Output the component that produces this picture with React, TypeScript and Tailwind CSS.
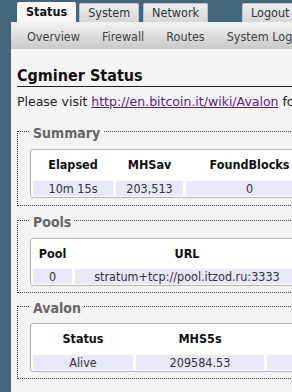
const font = { fontFamily: '"DejaVu Sans Condensed", "DejaVu Sans", Verdana, sans-serif' };
const wideFont = { fontFamily: '"DejaVu Sans", Verdana, sans-serif' };

type Section = {
  title: string;
  box: string;
  cols: string;
  headH: string;
  heads: string[];
  cells: string[];
};

const sections: Section[] = [
  {
    title: "Summary",
    box: "mt-[11px] pt-[8px] pb-[7px]",
    cols: "grid-cols-[80px_67px_127px]",
    headH: "h-[26px]",
    heads: ["Elapsed", "MHSav", "FoundBlocks"],
    cells: ["10m 15s", "203,513", "0"],
  },
  {
    title: "Pools",
    box: "mt-[4px] pt-[8px] pb-[6px]",
    cols: "grid-cols-[39px_224px]",
    headH: "h-[25px]",
    heads: ["Pool", "URL"],
    cells: ["0", "stratum+tcp://pool.itzod.ru:3333"],
  },
  {
    title: "Avalon",
    box: "mt-[3px] pt-[7px] pb-[6px]",
    cols: "grid-cols-[100px_128px_120px]",
    headH: "h-[26px]",
    heads: ["Status", "MHS5s", "Temp"],
    cells: ["Alive", "209584.53", "38"],
  },
];

function Tab({ label, active }: { label: string; active?: boolean }) {
  return (
    <div
      className={
        active
          ? "h-[20px] px-[9px] flex items-center bg-[#f8f8f8] rounded-t-[2px] font-bold text-[#111]"
          : "h-[19px] mt-px px-[8px] flex items-center rounded-t-[2px] border border-b-0 border-[#b9c3c9] bg-gradient-to-b from-[#eeeeee] to-[#d6d6d6] text-[#333]"
      }
    >
      {label}
    </div>
  );
}

export default function App() {
  return (
    <div
      className="w-[292px] h-[392px] overflow-hidden bg-[#42677b] text-[12.5px] leading-[16px]"
      style={font}
    >
      {/* top tabs */}
      <div className="h-[22px] pt-[2px] pl-[17px] flex items-start">
        <Tab label="Status" active />
        <div className="ml-[3px]">
          <Tab label="System" />
        </div>
        <div className="ml-[4px]">
          <Tab label="Network" />
        </div>
        <div className="ml-[34px] w-[80px] shrink-0">
          <Tab label="Logout" />
        </div>
      </div>

      <div className="flex h-[370px]">
        <div className="w-[11px] shrink-0" />
        <div className="w-[400px] shrink-0 bg-[#f4f4f4]">
          {/* sub menu */}
          <div className="h-[27px] pl-[5px] pt-[2px] flex items-center bg-gradient-to-b from-[#f3f3f3] to-[#c9c9c9] text-[#444]">
            {["Overview", "Firewall", "Routes", "System Log"].map((m) => (
              <span key={m} className="px-[11px] whitespace-nowrap">
                {m}
              </span>
            ))}
          </div>

          <div className="pl-[6px]">
            <h2 className="mt-[17px] text-[16px] leading-[20px] font-bold text-[#111] border-b border-[#222]">
              Cgminer Status
            </h2>
            <p className="mt-[7px] text-[#222] whitespace-nowrap" style={wideFont}>
              Please visit{" "}
              <a href="#" className="text-[#5a1e78] underline">
                http://en.bitcoin.it/wiki/Avalon
              </a>{" "}
              for more information.
            </p>

            {sections.map((s) => (
              <fieldset
                key={s.title}
                className={s.box + " border border-dotted border-[#444] px-[12px]"}
              >
                <legend className="px-[3px] pt-[4px] text-[14px] leading-[16px] font-bold text-[#666]">
                  {s.title}
                </legend>
                <div className="w-max rounded-[3px] border border-[#b5b5b5] bg-white px-[2px] pt-[2px] pb-px">
                  <div className={"grid gap-x-[3px] " + s.cols}>
                    {s.heads.map((h) => (
                      <div
                        key={h}
                        className={
                          s.headH +
                          " flex items-center justify-center font-bold text-[#111] whitespace-nowrap"
                        }
                      >
                        {h}
                      </div>
                    ))}
                  </div>
                  <div className={"grid gap-x-[3px] mt-[3px] " + s.cols}>
                    {s.cells.map((c, j) => (
                      <div
                        key={j}
                        className="h-[15px] flex items-center justify-center bg-[#e8e8f7] text-[#333] whitespace-nowrap"
                      >
                        {c}
                      </div>
                    ))}
                  </div>
                </div>
              </fieldset>
            ))}
          </div>
        </div>
      </div>
    </div>
  );
}
